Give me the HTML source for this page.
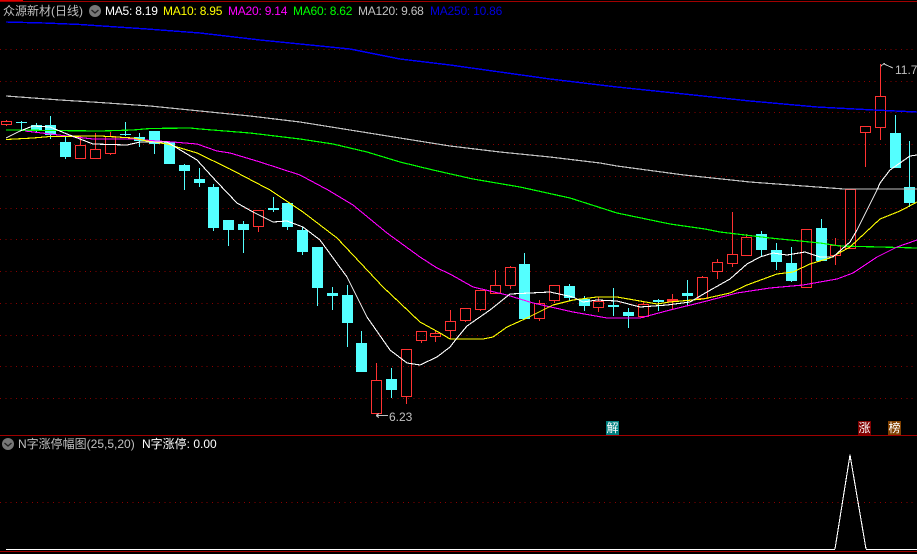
<!DOCTYPE html>
<html lang="zh"><head><meta charset="utf-8"><title>K</title>
<style>
html,body{margin:0;padding:0;background:#000;width:917px;height:554px;overflow:hidden}
#w{position:relative;width:917px;height:554px;background:#000;overflow:hidden}
svg{position:absolute;left:0;top:0}
.t{position:absolute;font:12px/14px "Liberation Sans","WenQuanYi Zen Hei","Noto Sans CJK SC",sans-serif;white-space:pre;-webkit-font-smoothing:none}
.n{letter-spacing:-.22px}
.m{position:absolute;width:13px;height:14px;color:#fff;font:12px/14px "WenQuanYi Zen Hei","Noto Sans CJK SC",sans-serif;text-align:center}
</style></head><body><div id="w">
<svg width="917" height="554" viewBox="0 0 917 554" shape-rendering="crispEdges" fill="none">
<path d="M0 1.500H917M0 435.500H917M0 551.500H917" stroke="#a00000"/>
<path d="M0 .5H23" stroke="#e00000"/>
<path d="M0 49.500H917M0 81.500H917M0 112.500H917M0 144.500H917M0 176.500H917M0 208.500H917M0 239.500H917M0 271.500H917M0 303.500H917M0 335.500H917M0 366.500H917M0 398.500H917M0 502.500H917" stroke="#8a0000" stroke-dasharray="1 4.3"/>
<path fill="#54ffff" d="M16 122h11V123h-11zM31 125h11V130h-11zM45 125h11V135h-11zM60 142h11V157h-11zM120 134h11V135h-11zM134 137h11V141h-11zM149 131h11V144h-11zM164 142h11V164h-11zM179 165h11V171h-11zM194 179h11V183h-11zM208 187h11V228h-11zM223 220h11V230h-11zM238 224h11V230h-11zM268 208h11V210h-11zM282 203h11V227h-11zM297 230h11V252h-11zM312 247h11V288h-11zM327 293h11V296h-11zM342 295h11V323h-11zM356 343h11V372h-11zM386 379h11V390h-11zM519 264h11V319h-11zM564 286h11V298h-11zM579 299h11V306h-11zM608 305h11V307h-11zM623 312h11V316h-11zM653 300h11V302h-11zM682 293h11V296h-11zM756 234h11V250h-11zM771 250h11V262h-11zM786 263h11V281h-11zM816 228h11V261h-11zM890 133h11V168h-11zM904 187h11V203h-11z"/>
<path stroke="#54ffff" d="M21.500 121V130M36.500 123V132M50.500 116V139M65.500 137V159M125.500 122V136M139.500 133V147M154.500 131V154M169.500 141V164M184.500 164V190M199.500 168V187M213.500 184V231M228.500 220V246M243.500 221V253M273.500 197V212M287.500 203V230M302.500 227V255M317.500 247V306M332.500 287V310M347.500 285V347M361.500 331V372M391.500 368V398M524.500 253V319M569.500 284V301M584.500 296V311M613.500 288V316M628.500 308V328M658.500 299V311M687.500 280V305M761.500 231V257M776.500 243V270M791.500 247V282M821.500 219V261M895.500 115V168M909.500 141V207"/>
<path fill="#ff3232" fill-rule="evenodd" d="M1 121h11v4h-11zM2 122h9v2h-9zM75 145h11v14h-11zM76 146h9v12h-9zM90 149h11v10h-11zM91 150h9v8h-9zM105 136h11v18h-11zM106 137h9v16h-9zM253 210h11v17h-11zM254 211h9v15h-9zM371 380h11v34h-11zM372 381h9v32h-9zM401 349h11v48h-11zM402 350h9v46h-9zM416 331h11v10h-11zM417 332h9v8h-9zM430 333h11v4h-11zM431 334h9v2h-9zM445 321h11v10h-11zM446 322h9v8h-9zM460 308h11v13h-11zM461 309h9v11h-9zM475 290h11v20h-11zM476 291h9v18h-9zM490 285h11v9h-11zM491 286h9v7h-9zM505 267h11v19h-11zM506 268h9v17h-9zM534 303h11v16h-11zM535 304h9v14h-9zM549 285h11v16h-11zM550 286h9v14h-9zM593 301h11v7h-11zM594 302h9v5h-9zM638 304h11v13h-11zM639 305h9v11h-9zM697 277h11v22h-11zM698 278h9v20h-9zM712 262h11v10h-11zM713 263h9v8h-9zM727 254h11v10h-11zM728 255h9v8h-9zM741 237h11v19h-11zM742 238h9v17h-9zM801 229h11v59h-11zM802 230h9v57h-9zM830 245h11v11h-11zM831 246h9v9h-9zM845 189h11v60h-11zM846 190h9v58h-9zM860 126h11v7h-11zM861 127h9v5h-9zM875 96h11v32h-11zM876 97h9v30h-9z"/>
<path fill="#ff3232" d="M6 120h1v1h-1zM6 125h1v1h-1zM80 136h1v9h-1zM95 133h1v16h-1zM110 132h1v4h-1zM110 154h1v1h-1zM258 227h1v5h-1zM376 363h1v17h-1zM406 397h1v7h-1zM421 341h1v2h-1zM435 330h1v3h-1zM435 337h1v5h-1zM450 310h1v11h-1zM450 331h1v8h-1zM465 321h1v1h-1zM480 310h1v1h-1zM495 270h1v15h-1zM510 266h1v1h-1zM510 286h1v3h-1zM539 300h1v3h-1zM539 319h1v2h-1zM554 301h1v2h-1zM598 297h1v4h-1zM598 308h1v4h-1zM643 301h1v3h-1zM643 317h1v1h-1zM702 276h1v1h-1zM717 259h1v3h-1zM717 272h1v7h-1zM732 212h1v42h-1zM732 264h1v3h-1zM746 234h1v3h-1zM835 238h1v7h-1zM835 256h1v9h-1zM865 133h1v34h-1zM880 64h1v32h-1zM880 128h1v12h-1zM667 299h11v3h-11zM672 294h1v16h-1z"/>
<g stroke-linejoin="round">
<polyline stroke="#0000ff" stroke-width="1.4" points="6,22 44,23 80,24.500 147,29 200,33 260,40 300,44 350,49 400,59 450,65 500,72 550,79 600,85 617,87 684,94 750,101 817,107 874,110 917,112"/>
<polyline stroke="#c0c0c0" stroke-width="1.2" points="6,96 60,100 100,102.500 150,106 200,111 250,116 300,122 350,130 400,138 450,146 500,152 550,157 600,163 617,166 684,175 750,182 817,187 844,189 917,189"/>
<polyline stroke="#00ff00" stroke-width="1.2" points="6,130 100,131 133,130 150,128.500 190,128 200,129 250,133 300,139 333,144 367,152 400,162 433,170 473,179 520,187 570,198 617,213 670,224 705,229 720,232 770,238 820,243 840,246 880,247 917,248"/>
<polyline stroke="#ff00ff" stroke-width="1.1" points="25,131 67,136 93,139 133,139 157,141 173,142 197,144 217,151 230,153 260,162 300,175 328,190 353,205 387,233 420,257 437,268 450,274 473,287 507,295 533,303 573,312 607,318 640,318 670,310 703,302 737,293 770,288 803,285 837,279 853,273 877,257 897,247 917,240"/>
<polyline stroke="#ffff00" stroke-width="1.1" points="6,139.500 33,138 50,136.500 100,136 133,138 147,141 167,144 197,153 230,169 270,190 303,212 337,238 353,255 383,287 400,303 420,322 440,333 450,339 483,339 493,337 507,327 527,318 553,305 573,300 597,297 617,297 640,301 657,304 670,302 703,299 730,293 747,285 777,274 793,272 810,264 830,258 850,247 880,219 900,211 917,202"/>
<polyline stroke="#ffffff" stroke-width="1.1" points="6,138 20,131 33,126 50,127 67,134 93,144 127,145 140,142 167,142 197,160 217,182 237,203 253,212 273,222 287,221 303,227 320,240 347,277 367,317 390,350 407,363 420,365 437,357 450,347 457,338 467,326 490,310 510,294 550,292 573,297 583,302 597,300 617,301 640,307 667,305 690,302 707,292 730,279 747,264 760,257 773,253 787,255 805,252 820,257 833,257 850,242 857,230 877,190 880,183 890,170 910,156 917,155"/>
<polyline stroke="#ffffff" stroke-width="1.1" points="835,549 850,455 866,549"/>
<path d="M6 549.500H835M866 549.500H917" stroke="#fff"/>
</g>
<path stroke="#c0c0c0" d="M881 66l3-2.500h1M884 64l9 4M376 415.500h12M376 415.500l3-2M376 415.500l3 2"/>
</svg>
<svg width="917" height="554" viewBox="0 0 917 554" fill="none">
<circle cx="95" cy="11" r="6" fill="#777"/><path d="M91.500 10l3.500 3 3.500-3" stroke="#222" stroke-width="1.300"/>
<circle cx="8" cy="444" r="6" fill="#777"/><path d="M4.500 443l3.500 3 3.500-3" stroke="#222" stroke-width="1.300"/>
</svg>
<span class="t" style="left:3px;top:4px;color:#c0c0c0">众源新材(日线)</span>
<span class="t n" style="left:105px;top:4px;color:#fff">MA5: 8.19</span>
<span class="t n" style="left:163px;top:4px;color:#ff0">MA10: 8.95</span>
<span class="t n" style="left:228px;top:4px;color:#f0f">MA20: 9.14</span>
<span class="t n" style="left:293px;top:4px;color:#0f0">MA60: 8.62</span>
<span class="t n" style="left:358px;top:4px;color:#c0c0c0">MA120: 9.68</span>
<span class="t n" style="left:430px;top:4px;color:#0000e0">MA250: 10.86</span>
<span class="t" style="left:18px;top:437px;color:#c0c0c0">N字涨停幅图(25,5,20)</span>
<span class="t" style="left:142px;top:437px;color:#fff">N字涨停: 0.00</span>
<span class="t" style="left:895px;top:63px;color:#c0c0c0">11.7</span>
<span class="t" style="left:389px;top:410px;color:#c0c0c0">6.23</span>
<span class="m" style="left:606px;top:421px;background:#008080">解</span>
<span class="m" style="left:858px;top:421px;background:#800000">涨</span>
<span class="m" style="left:888px;top:421px;background:#804000">榜</span>
</div></body></html>
